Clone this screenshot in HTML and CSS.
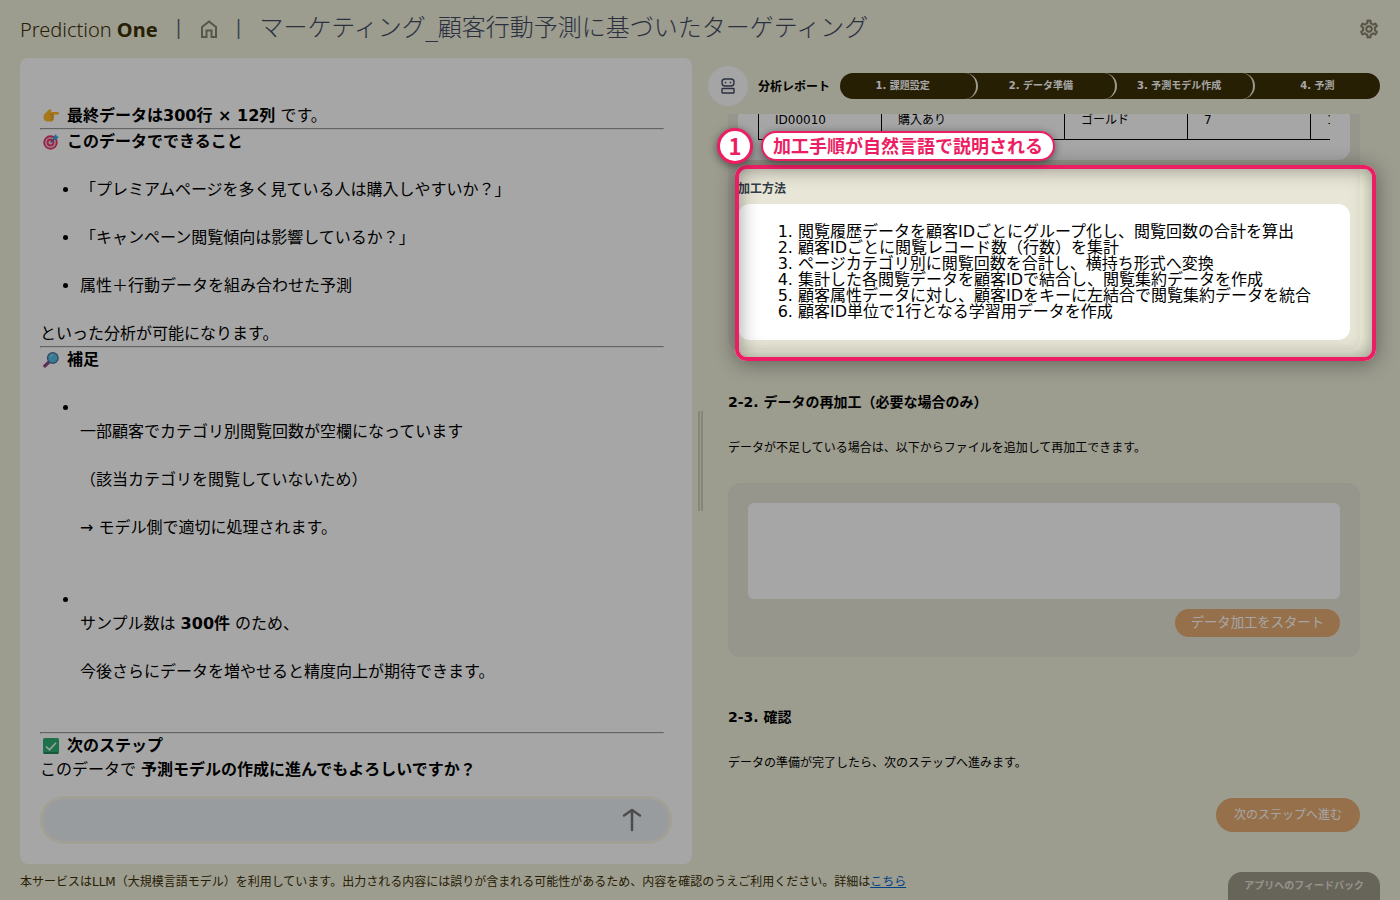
FILE: index.html
```html
<!DOCTYPE html>
<html lang="ja">
<head>
    <meta charset="UTF-8">
    <meta name="viewport" content="width=device-width, initial-scale=1.0">
    <title>Prediction One</title>
    <link rel="stylesheet" href="styles.css">
</head>
<body>
    <header class="header">
        <div class="logo">Prediction <b>One</b></div>
        <span class="sep">|</span>
        <a href="#" class="icon-link" aria-label="ホーム">
            <svg width="18" height="18" viewBox="0 0 18 18" fill="none" stroke="currentColor" stroke-width="2"><path d="M2 17V7L9 1.500L16 7V17H11.500V10.500H6.500V17Z"/></svg>
        </a>
        <span class="sep">|</span>
        <h1 class="title">マーケティング_顧客行動予測に基づいたターゲティング</h1>
        <button type="button" class="gear" aria-label="設定">
            <svg width="22" height="22" viewBox="0 0 24 24" fill="currentColor" stroke="currentColor" stroke-width=".3"><path d="M19.430 12.980c.04-.32.07-.64.07-.98s-.03-.66-.07-.98l2.110-1.650c.19-.15.24-.42.12-.64l-2-3.460c-.09-.16-.26-.25-.44-.25-.06 0-.12.01-.17.03l-2.490 1c-.52-.4-1.080-.73-1.690-.98l-.38-2.650C14.460 2.180 14.250 2 14 2h-4c-.25 0-.46.18-.49.42l-.38 2.650c-.61.25-1.170.59-1.690.98l-2.490-1c-.06-.02-.12-.03-.18-.03-.17 0-.34.09-.43.25l-2 3.460c-.13.22-.07.49.12.64l2.110 1.650c-.04.32-.07.65-.07.98s.03.66.07.98l-2.110 1.650c-.19.15-.24.42-.12.64l2 3.460c.09.16.26.25.44.25.06 0 .12-.01.17-.03l2.490-1c.52.4 1.080.73 1.690.98l.38 2.650c.03.24.24.42.49.42h4c.25 0 .46-.18.49-.42l.38-2.650c.61-.25 1.170-.59 1.690-.98l2.490 1c.06.02.12.03.18.03.17 0 .34-.09.43-.25l2-3.460c.12-.22.07-.49-.12-.64l-2.110-1.650zm-1.980-1.710c.04.31.05.52.05.73s-.02.43-.05.73l-.14 1.130.89.7 1.080.84-.7 1.210-1.270-.51-1.040-.42-.9.68c-.43.32-.84.56-1.250.73l-1.060.43-.16 1.130-.2 1.350h-1.400l-.19-1.350-.16-1.130-1.060-.43c-.43-.18-.83-.41-1.230-.71l-.91-.7-1.060.43-1.270.51-.7-1.210 1.080-.84.89-.7-.14-1.130c-.03-.31-.05-.54-.05-.74s.02-.43.05-.73l.14-1.130-.89-.7-1.080-.84.7-1.210 1.270.51 1.040.42.9-.68c.43-.32.84-.56 1.250-.73l1.060-.43.16-1.130.2-1.350h1.390l.19 1.350.16 1.130 1.060.43c.43.18.83.41 1.230.71l.91.7 1.060-.43 1.270-.51.7 1.210-1.070.85-.89.7.14 1.130zM12 8c-2.210 0-4 1.790-4 4s1.790 4 4 4 4-1.790 4-4-1.790-4-4-4zm0 6c-1.100 0-2-.9-2-2s.9-2 2-2 2 .9 2 2-.9 2-2 2z"/></svg>
        </button>
    </header>

    <main class="main">
        <!-- チャット -->
        <section class="chat">
            <div class="messages">
                <div>
                    <svg class="emoji" viewBox="0 0 16 16"><path fill="#fdb92c" d="M5 2.500C6 1.200 8 1 8.500 2L8 4H15.200C16.300 4 16.300 6.500 15.200 6.500H10.500C11.500 7 11.500 8.500 10.800 9C11.300 10 11 11 10.300 11.300C10.500 12.600 10 13.500 8.500 13.500H5C2 13.500 .5 12 .5 9.200C.5 6 3 5 5 2.500Z"/><path d="M7 6.500H10.500M7.500 9H10.800M7.500 11.300H10.300" stroke="#d98a20" stroke-width=".8" fill="none"/></svg>
                    <b>最終データは300行 × 12列</b> です。
                </div>
                <hr>
                <div>
                    <svg class="emoji" viewBox="0 0 16 16"><circle cx="7.500" cy="8.500" r="7.200" fill="#e8386c"/><circle cx="7.500" cy="8.500" r="5.300" fill="#f3d8e2"/><circle cx="7.500" cy="8.500" r="3.900" fill="#e8386c"/><circle cx="7.500" cy="8.500" r="2" fill="#f3d8e2"/><path d="M7.500 8.500L13 3" stroke="#6a5080" stroke-width="1.200"/><path fill="#36a5e8" d="M10 3.500L13 0L13.700 2.300L16 3L12.500 6L10.300 5.700Z"/></svg>
                    <b>このデータでできること</b>
                </div>
                <ul class="points">
                    <li>「プレミアムページを多く見ている人は購入しやすいか？」</li>
                    <li>「キャンペーン閲覧傾向は影響しているか？」</li>
                    <li>属性＋行動データを組み合わせた予測</li>
                </ul>
                <div>といった分析が可能になります。</div>
                <hr>
                <div>
                    <svg class="emoji" viewBox="0 0 16 16"><path d="M1.800 14L5.500 10.500" stroke="#8d4a86" stroke-width="3.200" stroke-linecap="round"/><circle cx="9.800" cy="6" r="5.300" fill="#58bde0" stroke="#4c6d9c" stroke-width="1.300"/><path d="M7 5Q8 3 10 2.800" stroke="#a7e3f2" fill="none"/></svg>
                    <b>補足</b>
                </div>
                <ul class="notes">
                    <li><br>
                        <p>一部顧客でカテゴリ別閲覧回数が空欄になっています</p>
                        <p>（該当カテゴリを閲覧していないため）</p>
                        <p>→ モデル側で適切に処理されます。</p>
                    </li>
                    <li><br>
                        <p>サンプル数は <b>300件</b> のため、</p>
                        <p>今後さらにデータを増やせると精度向上が期待できます。</p>
                    </li>
                </ul>
                <hr>
                <div>
                    <svg class="emoji" viewBox="0 0 16 16"><rect width="16" height="16" rx="1.500" fill="#2fae72"/><path d="M1 15H15" stroke="#1e7d50" stroke-width="1.500"/><path d="M3 8.500L6.500 11.800L13 4.800" fill="none" stroke="#e6fff2" stroke-width="1.600"/></svg>
                    <b>次のステップ</b>
                </div>
                <div>このデータで <b>予測モデルの作成に進んでもよろしいですか？</b></div>
            </div>
            <form class="composer">
                <input type="text" class="message-input" aria-label="メッセージ">
                <button type="button" class="send" aria-label="送信">
                    <svg width="20" height="24" viewBox="0 0 20 24" fill="none" stroke="currentColor" stroke-width="2.500" stroke-linecap="round" stroke-linejoin="round"><path d="M10 22V2M2 7.500L10 2L18 7.500"/></svg>
                </button>
            </form>
        </section>

        <div class="divider"></div>

        <!-- 分析レポート -->
        <section class="report">
            <div class="report-head">
                <span class="avatar">
                    <svg width="16" height="16" viewBox="0 0 16 16" fill="none" stroke="currentColor" stroke-width="1.400"><rect x="2" y="1" width="12" height="7" rx="3"/><rect x="2" y="10.500" width="12" height="4.500" rx=".6"/><path d="M5.500 3.700V5.300M10.500 3.700V5.300"/></svg>
                </span>
                <h2 class="report-name">分析レポート</h2>
                <ol class="steps">
                    <li>1. 課題設定</li>
                    <li>2. データ準備</li>
                    <li>3. 予測モデル作成</li>
                    <li>4. 予測</li>
                </ol>
            </div>

            <div class="report-body">
                <div class="result">
                    <div class="table-card">
                        <div class="table-wrap">
                            <table>
                                <tr>
                                    <td>ID00010</td>
                                    <td class="wide">購入あり</td>
                                    <td>ゴールド</td>
                                    <td>7</td>
                                    <td>1</td>
                                </tr>
                            </table>
                        </div>
                    </div>
                    <h3 class="method-title">加工方法</h3>
                    <ol class="method">
                        <li>閲覧履歴データを顧客IDごとにグループ化し、閲覧回数の合計を算出</li>
                        <li>顧客IDごとに閲覧レコード数（行数）を集計</li>
                        <li>ページカテゴリ別に閲覧回数を合計し、横持ち形式へ変換</li>
                        <li>集計した各閲覧データを顧客IDで結合し、閲覧集約データを作成</li>
                        <li>顧客属性データに対し、顧客IDをキーに左結合で閲覧集約データを統合</li>
                        <li>顧客ID単位で1行となる学習用データを作成</li>
                    </ol>
                </div>

                <h3 class="section-title">2-2. データの再加工（必要な場合のみ）</h3>
                <p class="section-text">データが不足している場合は、以下からファイルを追加して再加工できます。</p>
                <div class="rework">
                    <textarea class="rework-input" aria-label="再加工の内容"></textarea>
                    <button type="button" class="btn">データ加工をスタート</button>
                </div>

                <h3 class="section-title">2-3. 確認</h3>
                <p class="section-text">データの準備が完了したら、次のステップへ進みます。</p>
                <button type="button" class="btn btn-next">次のステップへ進む</button>
            </div>

            <!-- ガイドのハイライト -->
            <div class="spotlight"></div>
            <div class="callout">
                <span class="callout-no">1</span>
                <span class="callout-text">加工手順が自然言語で説明される</span>
            </div>
        </section>
    </main>

    <footer class="footer">
        <p>本サービスはLLM（大規模言語モデル）を利用しています。出力される内容には誤りが含まれる可能性があるため、内容を確認のうえご利用ください。詳細は<a href="#">こちら</a></p>
        <button type="button" class="feedback">アプリへのフィードバック</button>
    </footer>
</body>
</html>
```

FILE: styles.css
```css
/* General */
* {
    box-sizing: border-box;
}

body {
    display: flex;
    flex-direction: column;
    height: 100vh;
    margin: 0;
    overflow: hidden;
    background: #f0f0dc;
    color: #000;
    font-family: "DejaVu Sans", "Noto Sans CJK JP", sans-serif;
    font-size: 12px;
}

h1, h2, h3, p, ul, ol {
    margin: 0;
    padding: 0;
}

button {
    border: none;
    padding: 0;
    font-family: inherit;
    cursor: pointer;
}

svg {
    display: block;
}

/* Header */
.header {
    display: flex;
    align-items: center;
    height: 58px;
    padding: 0 20px;
}

.logo {
    color: #3c3006;
    font-family: "Noto Sans", sans-serif;
    font-size: 20px;
    font-weight: 300;
}

.logo b {
    font-weight: 700;
}

.sep {
    width: 42px;
    color: #5c6580;
    font-family: "Noto Sans", sans-serif;
    font-size: 20px;
    line-height: 24px;
    padding-bottom: 4px;
    text-align: center;
}

.icon-link {
    color: #88836c;
}

.title {
    color: #424b63;
    font-size: 24px;
    font-weight: 300;
    line-height: 56px;
    height: 58px;
}

.gear {
    margin-left: auto;
    background: none;
    color: #88836c;
}

/* Main */
.main {
    flex: 1;
    min-height: 0;
    display: grid;
    grid-template-columns: minmax(0, 1fr) 16px minmax(0, 1fr);
    padding: 0 20px;
}

/* Chat */
.chat {
    display: flex;
    flex-direction: column;
    min-height: 0;
    padding: 20px;
    background: #fff;
    border-radius: 8px;
}

.messages {
    flex: 1;
    display: flex;
    flex-direction: column;
    justify-content: flex-end;
    padding: 0 8px 14px 0;
    font-size: 16px;
    line-height: 24px;
}

.messages hr {
    width: 100%;
    margin: 0;
}

.emoji {
    display: inline-block;
    width: 16px;
    height: 16px;
    margin: 0 3px;
    vertical-align: -3px;
}

.points,
.notes {
    margin-top: 24px;
    padding-left: 40px;
}

.points li,
.notes p {
    margin-bottom: 24px;
}

.notes li {
    padding-bottom: 24px;
}

.composer {
    display: flex;
    align-items: center;
    height: 48px;
    padding-right: 22px;
    background: #eaf0f5;
    border: 3px solid #f9f6e4;
    border-radius: 24px;
}

.message-input {
    flex: 1;
    padding: 0 20px;
    background: none;
    border: none;
    font-size: 16px;
}

.send {
    display: flex;
    align-items: center;
    justify-content: center;
    width: 30px;
    height: 30px;
    background: none;
    color: #747474;
}

.divider {
    align-self: center;
    justify-self: center;
    width: 5px;
    height: 100px;
    border: solid #ccccbc;
    border-width: 0 2px;
}

/* Report */
.report {
    position: relative;
    display: flex;
    flex-direction: column;
    min-height: 0;
}

.report-head {
    display: flex;
    align-items: center;
    gap: 10px;
    height: 56px;
}

.avatar {
    display: flex;
    align-items: center;
    justify-content: center;
    width: 40px;
    height: 40px;
    background: #fdfdff;
    border-radius: 50%;
    color: #424b63;
}

.report-name {
    padding-bottom: 2px;
    font-size: 12px;
}

.steps {
    flex: 1;
    display: flex;
    gap: 13px;
    background: #3c3006;
    border-radius: 13px;
    color: #fff;
    font-size: 10px;
    font-weight: bold;
    line-height: 26px;
    list-style: none;
    text-align: center;
}

.steps li {
    position: relative;
    flex: 1;
}

.steps li:not(:last-child)::after {
    content: "";
    position: absolute;
    top: 0;
    right: -13px;
    width: 26px;
    height: 26px;
    border-right: 2px solid #f0f0dc;
    border-radius: 13px;
}

.report-body {
    flex: 1;
    min-height: 0;
    padding: 0 20px;
    overflow: hidden;
}

.result {
    margin-bottom: 40px;
    padding: 0 10px 10px;
    background: #e8e7d7;
    border-radius: 0 0 12px 12px;
}

.table-card {
    padding: 0 20px 20px;
    background: #fff;
    border-radius: 0 0 12px 12px;
}

.table-wrap {
    overflow: hidden;
}

table {
    width: 675px;
    table-layout: fixed;
    border-collapse: collapse;
}

td {
    width: 123px;
    padding: 0 16px 13px;
    border: 1px solid #000;
    border-top: none;
    line-height: 12px;
}

td.wide {
    width: 183px;
}

.method-title {
    padding: 17px 0 3px;
    color: #333c48;
    font-size: 12px;
    line-height: 24px;
}

.method {
    padding: 20px 20px 20px 60px;
    background: #fff;
    border-radius: 12px;
    font-size: 16px;
    line-height: 16px;
}

.section-title {
    font-size: 14px;
    line-height: 24px;
}

.section-text {
    margin: 22px 0 23px;
    line-height: 24px;
}

.rework {
    display: flex;
    flex-direction: column;
    align-items: flex-end;
    gap: 10px;
    margin-bottom: 48px;
    padding: 20px;
    background: #e8e7d7;
    border-radius: 12px;
}

.rework-input {
    width: 100%;
    height: 96px;
    border: none;
    border-radius: 6px;
    resize: none;
}

.btn {
    height: 28px;
    padding: 0 16px 3px;
    background: #e7ac72;
    border-radius: 17px;
    color: #fff;
}

.btn-next {
    display: block;
    height: 34px;
    margin-left: auto;
    padding: 0 18px 3px;
    font-size: 12px;
}

/* Guide */
.spotlight {
    position: absolute;
    top: 107px;
    left: 27px;
    right: 4px;
    height: 196px;
    border: 4px solid #ec1e63;
    border-radius: 12px;
    box-shadow: inset 0 0 20px rgba(0, 0, 0, 0.4), 0 2px 20px rgba(0, 0, 0, 0.4), 0 0 0 9999px rgba(0, 0, 0, 0.35);
    z-index: 10;
    pointer-events: none;
}

.callout {
    position: absolute;
    top: 70px;
    left: 9px;
    display: flex;
    align-items: center;
    gap: 8px;
    z-index: 11;
    color: #ec1e63;
    font-family: "Noto Sans CJK JP", sans-serif;
    font-weight: bold;
}

.callout-no,
.callout-text {
    background: #fff;
    border: 3px solid #ec1e63;
    border-radius: 18px;
    box-shadow: 0 2px 8px rgba(0, 0, 0, 0.5);
}

.callout-no {
    width: 36px;
    height: 36px;
    font-size: 22px;
    line-height: 28px;
    text-align: center;
}

.callout-text {
    height: 30px;
    padding: 0 10px;
    border-width: 2px;
    font-size: 18px;
    line-height: 24px;
}

/* Footer */
.footer {
    display: flex;
    align-items: flex-end;
    justify-content: space-between;
    height: 36px;
    padding: 0 20px;
    color: #3c3006;
}

.footer p {
    line-height: 36px;
}

.footer a {
    color: #0066cc;
}

.feedback {
    height: 28px;
    padding: 0 16px 3px;
    background: #9e9a8a;
    border-radius: 14px 14px 0 0;
    color: #e4e2d8;
    font-size: 10px;
    font-weight: bold;
}
```
